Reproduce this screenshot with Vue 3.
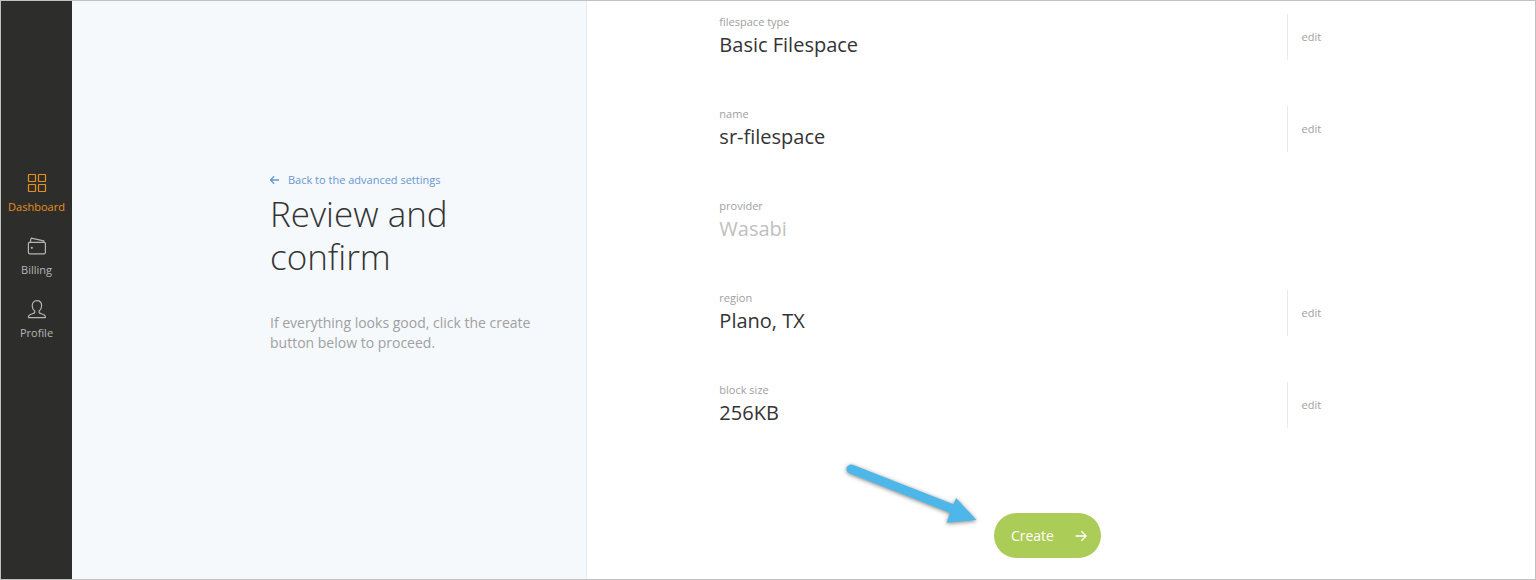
<script setup>
const navItems = [
  { id: 'dashboard', label: 'Dashboard', active: true },
  { id: 'billing', label: 'Billing', active: false },
  { id: 'profile', label: 'Profile', active: false },
]

const details = [
  { label: 'filespace type', value: 'Basic Filespace', editable: true },
  { label: 'name', value: 'sr-filespace', editable: true },
  { label: 'provider', value: 'Wasabi', editable: false },
  { label: 'region', value: 'Plano, TX', editable: true },
  { label: 'block size', value: '256KB', editable: true },
]
</script>

<template>
  <div class="page">
    <nav class="sidebar" aria-label="Main">
      <a
        v-for="item in navItems"
        :key="item.id"
        href="#"
        class="nav-item"
        :class="{ active: item.active }"
      >
        <svg class="nav-icon" viewBox="0 0 20 20" aria-hidden="true">
          <g v-if="item.id === 'dashboard'">
            <rect x="1.5" y="1.5" width="7" height="7" rx="0.5" />
            <rect x="11.5" y="1.5" width="7" height="7" rx="0.5" />
            <rect x="1.5" y="11.5" width="7" height="7" rx="0.5" />
            <rect x="11.5" y="11.5" width="7" height="7" rx="0.5" />
          </g>
          <g v-else-if="item.id === 'billing'">
            <path d="M2.6 6.4h14.6q1.2 0 1.2 1.2v9q0 1.2-1.2 1.2H2.6q-1.2 0-1.2-1.2v-9q0-1.2 1.2-1.2z" />
            <path d="M3.2 6.2L4.2 2.2l12.6 2.6v1.4" />
            <circle class="dot" cx="4.8" cy="11.8" r="1.1" />
          </g>
          <path
            v-else
            d="M9.9 1.6c-3 0-4.7 2.2-4.7 5.2 0 2.4 1 4.2 2.5 5.3v1.5c-.6 1-4.4 1.3-5.7 2.9-.4.6-.6 1.3-.6 2.1h17c0-.8-.2-1.5-.6-2.1-1.3-1.6-5.1-1.9-5.7-2.9v-1.5c1.5-1.1 2.5-2.9 2.5-5.3 0-3-1.700-5.200-4.700-5.200z"
          />
        </svg>
        <span>{{ item.label }}</span>
      </a>
    </nav>

    <aside class="intro">
      <a href="#" class="back">
        <svg class="arrow-icon" viewBox="0 0 12 12" aria-hidden="true">
          <path d="M9 6H0.700M4.200 2.200L0.500 6 4.200 9.800" />
        </svg>
        <span>Back to the advanced settings</span>
      </a>
      <h1>Review and confirm</h1>
      <p>If everything looks good, click the create button below to proceed.</p>
    </aside>

    <main class="review">
      <dl class="details">
        <div v-for="row in details" :key="row.label" class="row">
          <div class="field">
            <dt>{{ row.label }}</dt>
            <dd :class="{ muted: !row.editable }">{{ row.value }}</dd>
          </div>
          <div v-if="row.editable" class="action">
            <button type="button" class="edit" :aria-label="`edit ${row.label}`">edit</button>
          </div>
        </div>
      </dl>
      <div class="submit">
        <button type="button" class="create">
          <span>Create</span>
          <svg class="arrow-icon" viewBox="0 0 12 12" aria-hidden="true">
            <path d="M0.6 6H11M6.4 1.2L11.2 6 6.4 10.8" />
          </svg>
        </button>
        <svg class="pointer" viewBox="0 0 140 74" aria-hidden="true">
          <path d="M12 15L114 55" class="shaft" />
          <path d="M117 44L137.5 66 107.5 68.7z" class="head" />
        </svg>
      </div>
    </main>
  </div>
</template>

<style>
body {
  margin: 0;
}
</style>

<style scoped>
.page {
  box-sizing: border-box;
  display: flex;
  min-height: 100vh;
  border: 1px solid #c1c1c1;
  background: #fff;
  color: #343434;
  font-family: "Open Sans", "Noto Sans", sans-serif;
}

.sidebar {
  flex: 0 0 71px;
  display: flex;
  flex-direction: column;
  gap: 22px;
  box-sizing: border-box;
  padding-top: 172px;
  background: #2d2e2b;
}

.nav-item {
  display: flex;
  flex-direction: column;
  align-items: center;
  gap: 7px;
  color: #b5b5b5;
  font-size: 11px;
  line-height: 14px;
  text-decoration: none;
}

.nav-item.active {
  color: #ea8f1c;
}

.nav-icon {
  width: 20px;
  height: 20px;
  fill: none;
  stroke: currentColor;
  stroke-width: 1.2;
  stroke-linejoin: round;
}

.nav-icon .dot {
  fill: currentColor;
  stroke: none;
}

.intro {
  flex: 0 0 33.6%;
  box-sizing: border-box;
  padding: 171px 50px 0 198px;
  border-right: 1px solid #e3ebf3;
  background: #f5f9fc;
}

.back {
  display: flex;
  align-items: center;
  gap: 6px;
  color: #6896d2;
  font-size: 11px;
  line-height: 16px;
  text-decoration: none;
}

.arrow-icon {
  width: 12px;
  height: 12px;
  fill: none;
  stroke: currentColor;
  stroke-width: 1.3;
}

h1 {
  margin: 4px 0 35px;
  font-size: 35px;
  font-weight: 300;
  line-height: 43px;
}

p {
  margin: 0;
  color: #a0a0a0;
  font-size: 14px;
  line-height: 20px;
}

.review {
  flex: 1;
  min-width: 0;
  box-sizing: border-box;
  padding: 13px 10.4% 20px 8.6%;
}

.details {
  display: flex;
  flex-direction: column;
  gap: 46px;
  margin: 0;
}

.row {
  display: flex;
  justify-content: space-between;
}

dt {
  color: #a0a0a0;
  font-size: 11px;
  line-height: 16px;
}

dd {
  margin: 0;
  font-size: 20px;
  line-height: 30px;
}

.muted {
  color: #c0c0c0;
}

.action {
  display: flex;
  align-items: center;
  box-sizing: border-box;
  width: 88px;
  padding-left: 13px;
  border-left: 1px solid #e3ebf3;
}

.edit {
  padding: 0;
  border: 0;
  background: none;
  color: #a0a0a0;
  font: inherit;
  font-size: 11px;
  line-height: 16px;
}

.submit {
  position: relative;
  display: flex;
  justify-content: center;
  margin-top: 85px;
}

.create {
  display: flex;
  align-items: center;
  justify-content: space-between;
  width: 107px;
  height: 45px;
  padding: 0 14px 0 17px;
  border: 0;
  border-radius: 23px;
  background: #abcc57;
  color: #fff;
  font: inherit;
  font-size: 14px;
}

.pointer {
  position: absolute;
  top: -59px;
  right: calc(50% + 68px);
  width: 140px;
  height: 74px;
  filter: drop-shadow(0 1px 2px rgba(0, 0, 0, 0.5));
}

.shaft {
  fill: none;
  stroke: #4db7ea;
  stroke-width: 9;
  stroke-linecap: round;
}

.head {
  fill: #4db7ea;
}
</style>
